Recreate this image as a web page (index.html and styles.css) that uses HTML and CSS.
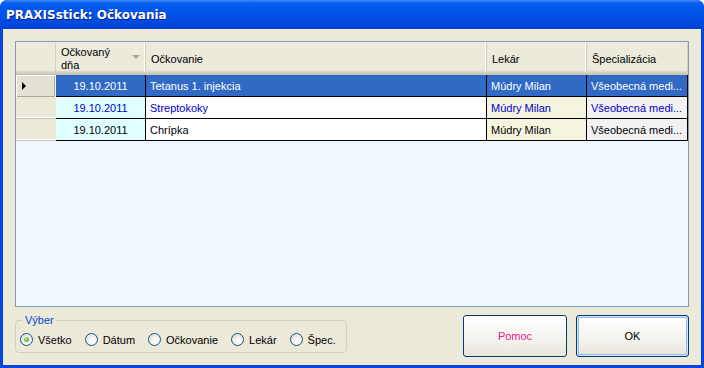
FILE: index.html
```html
<!DOCTYPE html>
<html>
<head>
  <title>PRAXISstick: Očkovania</title>
  <link rel="stylesheet" href="styles.css">
</head>
<body>
  <div class="window">
    <div class="titlebar">PRAXISstick: Očkovania</div>
    <div class="client">
      <div class="grid">
        <div class="row head">
          <div class="cell rowhead"></div>
          <div class="cell col-date">Očkovaný<br>dňa<span class="sort"></span></div>
          <div class="cell">Očkovanie</div>
          <div class="cell">Lekár</div>
          <div class="cell last">Špecializácia</div>
        </div>
        <div class="row selected">
          <div class="cell rowhead current"><span class="arrow"></span></div>
          <div class="cell date">19.10.2011</div>
          <div class="cell name">Tetanus 1. injekcia</div>
          <div class="cell doc">Múdry Milan</div>
          <div class="cell spec">Všeobecná medi...</div>
        </div>
        <div class="row blue">
          <div class="cell rowhead"></div>
          <div class="cell date">19.10.2011</div>
          <div class="cell name">Streptokoky</div>
          <div class="cell doc">Múdry Milan</div>
          <div class="cell spec">Všeobecná medi...</div>
        </div>
        <div class="row">
          <div class="cell rowhead"></div>
          <div class="cell date">19.10.2011</div>
          <div class="cell name">Chrípka</div>
          <div class="cell doc">Múdry Milan</div>
          <div class="cell spec">Všeobecná medi...</div>
        </div>
      </div>

      <div class="bottom">
        <fieldset class="filter">
          <legend>Výber</legend>
          <label class="radio"><span class="dot on"></span>Všetko</label>
          <label class="radio"><span class="dot"></span>Dátum</label>
          <label class="radio"><span class="dot"></span>Očkovanie</label>
          <label class="radio"><span class="dot"></span>Lekár</label>
          <label class="radio"><span class="dot"></span>Špec.</label>
        </fieldset>
        <div class="buttons">
          <button type="button" class="help">Pomoc</button>
          <button type="button" class="ok">OK</button>
        </div>
      </div>
    </div>
  </div>
</body>
</html>
```

FILE: styles.css
```css
body {
  margin: 0;
  font-family: "Liberation Sans", Arial, sans-serif;
  font-size: 11px;
}

.window {
  width: 704px;
  height: 368px;
  display: flex;
  flex-direction: column;
  background: #0845dc;
  border-radius: 7px 7px 0 0;
  overflow: hidden;
}

.titlebar {
  height: 29px;
  line-height: 30px;
  padding-left: 6px;
  color: #fff;
  font-family: "DejaVu Sans", sans-serif;
  font-weight: bold;
  font-size: 12px;
  text-shadow: 1px 1px 0 #0a1e88;
  background: linear-gradient(#3d8cf8 0, #0a5ff0 3px, #0058ee 8px, #0253e6 16px, #0048dd 24px, #003fd5 29px);
}

.client {
  flex: 1;
  margin: 0 3px 3px 3px;
  background: #ece9d8;
  padding: 12px 12px 0 12px;
}

.grid {
  height: 264px;
  border: 1px solid #7f9db9;
  background: #f0f7ff;
}

.row {
  display: grid;
  grid-template-columns: 40px 90px 341px 100px 101px;
  height: 22px;
}

.cell {
  border-right: 1px solid #000;
  border-bottom: 1px solid #000;
  padding: 1px 4px 0 4px;
  line-height: 21px;
  white-space: nowrap;
  overflow: hidden;
  color: #000;
}

.date {
  text-align: center;
  background: #e0ffff;
}

.name {
  background: #fff;
}

.doc {
  background: #f5f5df;
}

.spec {
  background: #f2f2f2;
}

.row.blue .cell {
  color: #0000cc;
}

.row.selected .cell {
  background: #316ac5;
  color: #fff;
}

/* header */
.row.head {
  height: 33px;
  background: linear-gradient(#ebeadb 0, #ebeadb 28px, #d6d3c5 30px, #c2bfae 33px);
}

.row.head .cell {
  border: none;
  background: none;
  line-height: 13px;
  padding: 3px 5px 0 5px;
  display: flex;
  align-items: center;
  height: 26px;
  margin-top: 1px;
  box-shadow: inset -1px 0 0 #d0cdbc, inset -2px 0 0 #fff;
}

.row.head .cell.last,
.row.head .rowhead {
  box-shadow: inset -1px 0 0 #d0cdbc;
}

.col-date {
  position: relative;
}

.sort {
  position: absolute;
  right: 6px;
  top: 12px;
  border-left: 4px solid transparent;
  border-right: 4px solid transparent;
  border-top: 4px solid #aca899;
}

/* row selectors */
.row .rowhead {
  background: #ece9d8;
  border: none;
  padding: 0;
  box-shadow: inset 0 -1px 0 #cbc7b8, inset 0 -2px 0 #fff;
  position: relative;
}

.row .rowhead.current {
  background: #e3e1d4;
  box-shadow: inset 1px 1px 0 #fff, inset -1px -1px 0 #aca899;
  margin-right: 1px;
}

.arrow {
  position: absolute;
  left: 6px;
  top: 7px;
  border-top: 4px solid transparent;
  border-bottom: 4px solid transparent;
  border-left: 4px solid #000;
}

/* bottom panel */
.bottom {
  display: flex;
  justify-content: space-between;
  margin-top: 7px;
}

.filter {
  margin: 0;
  padding: 4px 0 0 4px;
  min-inline-size: 0;
  width: 326px;
  height: 33px;
  border: 1px solid #d0d0bf;
  border-radius: 4px;
  display: flex;
  align-items: center;
}

.filter legend {
  color: #0046d5;
  padding: 0 2px;
  margin-left: 3px;
}

.radio {
  display: flex;
  align-items: center;
  margin-right: 13px;
  margin-top: -3px;
}

.radio:last-child {
  margin-right: 0;
}

.dot {
  width: 11px;
  height: 11px;
  border: 1px solid #1c5180;
  border-radius: 50%;
  background: radial-gradient(circle at 60% 65%, #fff 0, #f3f2ee 40%, #d6d3c8 100%);
  margin-right: 5px;
  position: relative;
}

.dot.on::after {
  content: "";
  position: absolute;
  left: 3px;
  top: 3px;
  width: 5px;
  height: 5px;
  border-radius: 50%;
  background: radial-gradient(circle at 40% 35%, #a6ef8c, #21a121);
}

.buttons {
  display: flex;
  gap: 9px;
  margin-top: 1px;
}

button {
  font-family: "Liberation Sans", Arial, sans-serif;
  font-size: 11px;
  height: 42px;
  border: 1px solid #003c74;
  border-radius: 3px;
  background: linear-gradient(#ffffff, #f4f3ee 60%, #e6e4da);
  color: #000;
}

.help {
  width: 104px;
  color: #e6198b;
}

.ok {
  width: 113px;
  box-shadow: inset 0 0 0 1px #cee7ff, inset 0 0 0 2px #98b8ea;
}
```
